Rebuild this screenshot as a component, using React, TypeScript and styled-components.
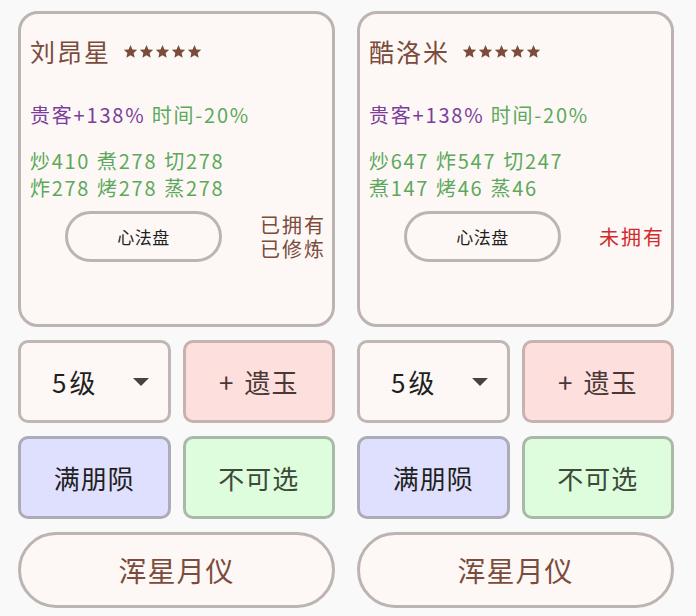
import styled, { createGlobalStyle } from "styled-components";

const GlobalStyle = createGlobalStyle`
  html, body {
    margin: 0;
    padding: 0;
    background: #f9f9f9;
    font-family: "Noto Sans CJK SC", "Noto Sans", sans-serif;
  }
`;

const colors = {
  page: "#f9f9f9",
  cream: "#fdf8f5",
  border: "#bdb4b1",
  brown: "#7b4b3b",
  purple: "#7c3e9c",
  green: "#5ca95c",
  red: "#d22b2b",
};

const Page = styled.div`
  display: grid;
  grid-template-columns: 317px 317px;
  column-gap: 22px;
  padding: 11px 0 0 18px;
`;

const Column = styled.div`
  display: flex;
  flex-direction: column;
  gap: 13px;
`;

const Card = styled.div`
  box-sizing: border-box;
  height: 316px;
  border: 3px solid ${colors.border};
  border-radius: 20px;
  background: ${colors.cream};
  padding: 21px 0 0 9px;
  display: flex;
  flex-direction: column;
`;

const TitleRow = styled.div`
  display: flex;
  align-items: center;
  height: 32px;
  gap: 12px;
`;

const Name = styled.span`
  font-size: 25px;
  letter-spacing: 2px;
  color: ${colors.brown};
`;

const Stars = styled.span`
  display: flex;
  gap: 1px;
  color: ${colors.brown};
`;

const Bonus = styled.div`
  margin-top: 34px;
  font-size: 20px;
  line-height: 28px;
  letter-spacing: 1.8px;
  white-space: nowrap;
`;

const Tone = styled.span<{ $tone: string }>`
  color: ${(p) => p.$tone};
`;

const Skills = styled.div`
  margin-top: 18px;
  font-size: 20px;
  line-height: 27px;
  letter-spacing: 1.7px;
  color: ${colors.green};
  white-space: nowrap;
`;

const Skill = styled.span`
  margin-right: 7px;
`;

const FootRow = styled.div`
  margin-top: 10px;
  display: flex;
  align-items: center;
  justify-content: space-between;
  padding: 0 6px 0 35px;
`;

const PillButton = styled.div`
  box-sizing: border-box;
  width: 157px;
  height: 51px;
  border: 3px solid #bab4b2;
  border-radius: 26px;
  display: flex;
  align-items: center;
  justify-content: center;
  font-size: 17px;
  letter-spacing: 0.5px;
  color: #1e1e1e;
`;

const Owned = styled.div<{ $missing?: boolean }>`
  font-size: 20px;
  line-height: 24px;
  letter-spacing: 2px;
  color: ${(p) => (p.$missing ? colors.red : colors.brown)};
`;

const Grid = styled.div`
  display: grid;
  grid-template-columns: 1fr 1fr;
  gap: 13px 12px;
`;

const Tile = styled.div<{ $bg: string; $line: string; $ink: string }>`
  box-sizing: border-box;
  height: 83px;
  border: 3px solid ${(p) => p.$line};
  border-radius: 10px;
  background: ${(p) => p.$bg};
  color: ${(p) => p.$ink};
  font-size: 26px;
  letter-spacing: 1px;
  display: flex;
  align-items: center;
  justify-content: center;
  gap: 10px;
`;

const Select = styled(Tile)`
  justify-content: space-between;
  padding: 0 19px 0 31px;
  letter-spacing: 3px;
`;

const Caret = styled.span`
  width: 0;
  height: 0;
  border-left: 8px solid transparent;
  border-right: 8px solid transparent;
  border-top: 8px solid #4a4242;
`;

const WideButton = styled.div`
  box-sizing: border-box;
  height: 76px;
  border: 3px solid ${colors.border};
  border-radius: 38px;
  background: ${colors.cream};
  color: ${colors.brown};
  font-size: 28px;
  letter-spacing: 1px;
  display: flex;
  align-items: center;
  justify-content: center;
`;

const StarIcon = () => (
  <svg width="15" height="15" viewBox="0 0 24 24">
    <path
      fill="currentColor"
      d="M12 1.5l3.1 7.1 7.7.7-5.8 5.1 1.7 7.6L12 18l-6.7 4 1.7-7.6L1.2 9.3l7.7-.7z"
    />
  </svg>
);

type Chef = {
  name: string;
  skills: [string, number][];
  owned: string[];
  missing?: boolean;
};

const chefs: Chef[] = [
  {
    name: "刘昂星",
    skills: [
      ["炒", 410],
      ["煮", 278],
      ["切", 278],
      ["炸", 278],
      ["烤", 278],
      ["蒸", 278],
    ],
    owned: ["已拥有", "已修炼"],
  },
  {
    name: "酷洛米",
    skills: [
      ["炒", 647],
      ["炸", 547],
      ["切", 247],
      ["煮", 147],
      ["烤", 46],
      ["蒸", 46],
    ],
    owned: ["未拥有"],
    missing: true,
  },
];

function ChefColumn({ chef }: { chef: Chef }) {
  const lines = [chef.skills.slice(0, 3), chef.skills.slice(3)];
  return (
    <Column>
      <Card>
        <TitleRow>
          <Name>{chef.name}</Name>
          <Stars>
            {[0, 1, 2, 3, 4].map((i) => (
              <StarIcon key={i} />
            ))}
          </Stars>
        </TitleRow>
        <Bonus>
          <Tone $tone={colors.purple}>贵客+138%</Tone>{" "}
          <Tone $tone={colors.green}>时间-20%</Tone>
        </Bonus>
        <Skills>
          {lines.map((line, i) => (
            <div key={i}>
              {line.map(([k, v]) => (
                <Skill key={k}>
                  {k}
                  {v}
                </Skill>
              ))}
            </div>
          ))}
        </Skills>
        <FootRow>
          <PillButton>心法盘</PillButton>
          <Owned $missing={chef.missing}>
            {chef.owned.map((t) => (
              <div key={t}>{t}</div>
            ))}
          </Owned>
        </FootRow>
      </Card>
      <Grid>
        <Select $bg={colors.cream} $line="#c0b6b3" $ink="#1f1f1f">
          <span>5级</span>
          <Caret />
        </Select>
        <Tile $bg="#fddfdd" $line="#c8b2b0" $ink="#4a3836">
          <span>+</span>
          <span>遗玉</span>
        </Tile>
        <Tile $bg="#dfe0fd" $line="#adabb7" $ink="#1f1f1f">
          满朋陨
        </Tile>
        <Tile $bg="#defddc" $line="#aab8a9" $ink="#3d4a3b">
          不可选
        </Tile>
      </Grid>
      <WideButton>浑星月仪</WideButton>
    </Column>
  );
}

export default function App() {
  return (
    <>
      <GlobalStyle />
      <Page>
        {chefs.map((c) => (
          <ChefColumn key={c.name} chef={c} />
        ))}
      </Page>
    </>
  );
}
